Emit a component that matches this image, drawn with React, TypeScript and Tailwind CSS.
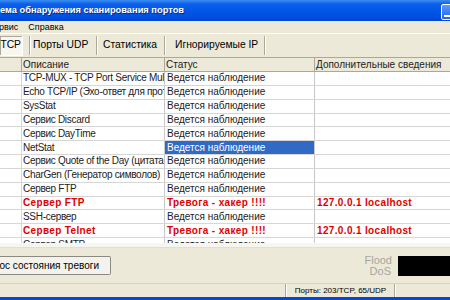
import React from "react";

type Row = { d: string; s: string; x?: string; red?: boolean; sel?: boolean };

const rows: Row[] = [
  { d: "TCP-MUX - TCP Port Service Multiplexer", s: "Ведется наблюдение" },
  { d: "Echo TCP/IP (Эхо-ответ для протокола)", s: "Ведется наблюдение" },
  { d: "SysStat", s: "Ведется наблюдение" },
  { d: "Сервис Discard", s: "Ведется наблюдение" },
  { d: "Сервис DayTime", s: "Ведется наблюдение" },
  { d: "NetStat", s: "Ведется наблюдение", sel: true },
  { d: "Сервис Quote of the Day (цитата дня)", s: "Ведется наблюдение" },
  { d: "CharGen (Генератор символов)", s: "Ведется наблюдение" },
  { d: "Сервер FTP", s: "Ведется наблюдение" },
  { d: "Сервер FTP", s: "Тревога - хакер !!!!", x: "127.0.0.1 localhost", red: true },
  { d: "SSH-сервер", s: "Ведется наблюдение" },
  { d: "Сервер Telnet", s: "Тревога - хакер !!!!", x: "127.0.0.1 localhost", red: true },
  { d: "Сервер SMTP", s: "Ведется наблюдение" },
];

export default function App() {
  const font = { fontFamily: '"Liberation Sans", Arial, sans-serif' };
  const red = "text-[#E00000] font-bold tracking-[0.35px]";
  return (
    <div className="w-[450px] h-[300px] overflow-hidden bg-[#ECE9D8] flex flex-col text-black" style={font}>
      {/* Title bar */}
      <div className="h-[21px] shrink-0 flex items-center justify-between bg-[linear-gradient(to_bottom,#3C8EF3_0%,#0A5EEA_20%,#0055E5_60%,#0048D8_100%)]">
        <span className="text-white font-bold text-[9.3px] leading-none whitespace-nowrap" style={{ textShadow: "1px 1px 0 #0a2a8a" }}>
          ема обнаружения сканирования портов
        </span>
        <div className="w-[14px] h-[16px] mr-[-5px] mt-[2px] rounded-[2px] border border-white bg-[linear-gradient(to_bottom,#5A9BFF,#2462E8)] flex items-end pl-[2px] pb-[2px]">
          <div className="w-[6px] h-[2px] bg-white" />
        </div>
      </div>
      {/* Menu */}
      <div className="h-[12px] shrink-0 flex items-center text-[9px] leading-none gap-[10px]">
        <span className="ml-[-1px]">рвис</span>
        <span>Справка</span>
      </div>
      <div className="h-[1px] bg-white shrink-0" />
      {/* Tabs */}
      <div className="h-[24px] shrink-0 flex items-center text-[10.3px] leading-none whitespace-nowrap border-b border-[#ACA899]">
        <div className="h-[20px] w-[23px] shrink-0 bg-[#F7F6F1] shadow-[inset_-1px_-1px_0_#FFFFFF,inset_1px_1px_0_#ACA899] flex items-center justify-end pr-[2px] overflow-hidden">
          TCP
        </div>
        <div className="w-[6px] shrink-0" />
        <div className="h-[19px] w-[2px] shrink-0 border-l border-[#ACA899] border-r border-r-white" />
        <div className="w-[65px] shrink-0 pl-[2px]">Порты UDP</div>
        <div className="h-[19px] w-[2px] shrink-0 border-l border-[#ACA899] border-r border-r-white" />
        <div className="w-[66px] shrink-0 pl-[5px]">Статистика</div>
        <div className="h-[19px] w-[2px] shrink-0 border-l border-[#ACA899] border-r border-r-white" />
        <div className="w-[98px] shrink-0 pl-[9px]">Игнорируемые IP</div>
        <div className="h-[19px] w-[2px] shrink-0 border-l border-[#ACA899] border-r border-r-white" />
      </div>
      {/* Table */}
      <div className="h-[185px] shrink-0 bg-white overflow-hidden flex flex-col text-[10px] leading-none">
        <div className="h-[14px] shrink-0 flex bg-[#ECE9D8] border-b border-[#ACA899] text-[#222]">
          <div className="w-[22px] shrink-0 border-r border-[#ACA899]" />
          <div className="w-[143px] shrink-0 border-r border-[#ACA899] pl-[1px] flex items-center">Описание</div>
          <div className="w-[150px] shrink-0 border-r border-[#ACA899] pl-[1px] flex items-center">Статус</div>
          <div className="flex-1 pl-[1px] flex items-center whitespace-nowrap overflow-hidden">Дополнительные сведения</div>
        </div>
        {rows.map((r, i) => (
          <div key={i} className="h-[13.85px] shrink-0 flex border-b border-[#D6D6D6] text-[#222]">
            <div className="w-[22px] shrink-0 border-r border-[#D6D6D6]" />
            <div className={`w-[143px] shrink-0 border-r border-[#C8C8C8] pl-[1px] flex items-center whitespace-nowrap overflow-hidden ${r.red ? red : "tracking-[-0.3px]"}`}>
              {r.d}
            </div>
            <div className={`w-[150px] shrink-0 border-r border-[#C8C8C8] pl-[2px] flex items-center whitespace-nowrap overflow-hidden ${r.red ? red : ""} ${r.sel ? "bg-[#316AC5] text-white" : ""}`}>
              {r.s}
            </div>
            <div className={`flex-1 pl-[2px] flex items-center whitespace-nowrap overflow-hidden ${r.red ? red : ""}`}>
              {r.x ?? ""}
            </div>
          </div>
        ))}
      </div>
      <div className="h-[5px] shrink-0 bg-[#F6F5EF] border-b border-[#E2DFD0]" />
      {/* Bottom panel */}
      <div className="flex-1 flex items-center justify-between text-[10px]">
        <div className="h-[19px] w-[111px] bg-[#F3F2EC] border border-[#8C8A80] border-l-0 rounded-r-[2px] flex items-center justify-end pr-[11px] whitespace-nowrap overflow-hidden">
          ос состояния тревоги
        </div>
        <div className="flex items-center">
          <div className="text-[11px] leading-[11px] text-[#A7A69E] text-right mr-[6px]">
            <div>Flood</div>
            <div className="pr-[1px]">DoS</div>
          </div>
          <div className="w-[52px] h-[20px] bg-black" />
        </div>
      </div>
      {/* Status bar */}
      <div className="h-[14px] shrink-0 flex text-[8px] leading-none border-t border-[#D8D4C4]">
        <div className="w-[286px] shrink-0 border-r border-[#ACA899]" />
        <div className="w-[109px] shrink-0 border-r border-[#ACA899] border-l border-l-white flex items-center justify-center whitespace-nowrap">
          Порты: 203/TCP, 65/UDP
        </div>
        <div className="flex-1 border-l border-white" />
      </div>
      <div className="h-[3px] shrink-0 bg-[#0A46D0]" />
    </div>
  );
}
